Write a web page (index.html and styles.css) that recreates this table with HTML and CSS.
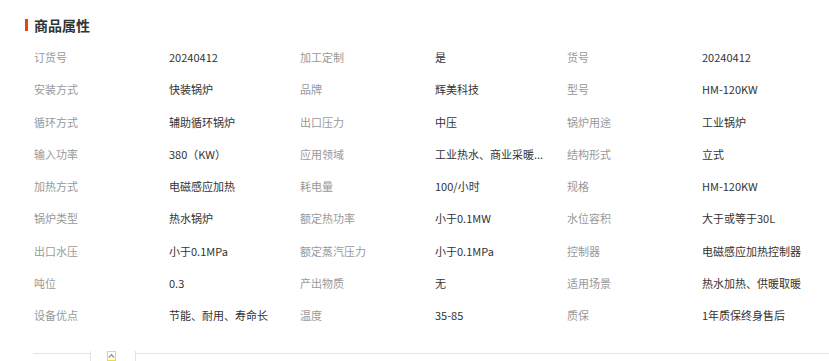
FILE: index.html
```html
<!DOCTYPE html>
<html lang="zh-CN">
<head>
<meta charset="utf-8">
<title>商品属性</title>
<link rel="stylesheet" href="styles.css">
</head>
<body>
<div class="panel">
  <h2 class="title">商品属性</h2>
  <div class="grid">
    <div class="k">订货号</div><div class="v">20240412</div>
    <div class="k">加工定制</div><div class="v">是</div>
    <div class="k">货号</div><div class="v">20240412</div>

    <div class="k">安装方式</div><div class="v">快装锅炉</div>
    <div class="k">品牌</div><div class="v">辉美科技</div>
    <div class="k">型号</div><div class="v">HM-120KW</div>

    <div class="k">循环方式</div><div class="v">辅助循环锅炉</div>
    <div class="k">出口压力</div><div class="v">中压</div>
    <div class="k">锅炉用途</div><div class="v">工业锅炉</div>

    <div class="k">输入功率</div><div class="v">380（KW）</div>
    <div class="k">应用领域</div><div class="v">工业热水、商业采暖...</div>
    <div class="k">结构形式</div><div class="v">立式</div>

    <div class="k">加热方式</div><div class="v">电磁感应加热</div>
    <div class="k">耗电量</div><div class="v">100/小时</div>
    <div class="k">规格</div><div class="v">HM-120KW</div>

    <div class="k">锅炉类型</div><div class="v">热水锅炉</div>
    <div class="k">额定热功率</div><div class="v">小于0.1MW</div>
    <div class="k">水位容积</div><div class="v">大于或等于30L</div>

    <div class="k">出口水压</div><div class="v">小于0.1MPa</div>
    <div class="k">额定蒸汽压力</div><div class="v">小于0.1MPa</div>
    <div class="k">控制器</div><div class="v">电磁感应加热控制器</div>

    <div class="k">吨位</div><div class="v">0.3</div>
    <div class="k">产出物质</div><div class="v">无</div>
    <div class="k">适用场景</div><div class="v">热水加热、供暖取暖</div>

    <div class="k">设备优点</div><div class="v">节能、耐用、寿命长</div>
    <div class="k">温度</div><div class="v">35-85</div>
    <div class="k">质保</div><div class="v">1年质保终身售后</div>
  </div>
</div>
<div class="tabbar">
  <div class="seg-left"></div>
  <div class="seg-tab"><span class="caret"><svg width="7" height="6" viewBox="0 0 7 6"><path d="M0.8 4.6 L3.5 1.6 L6.2 4.6" fill="none" stroke="#888" stroke-width="1.2"/></svg></span></div>
  <div class="seg-right"></div>
</div>
</body>
</html>
```
FILE: styles.css
```css
html, body {
  margin: 0;
  padding: 0;
  background: #fff;
}
body {
  width: 829px;
  height: 361px;
  overflow: hidden;
  font-family: "Noto Sans CJK SC", "Liberation Sans", sans-serif;
  font-size: 11px;
  color: #333;
}
.panel {
  padding: 17px 0 0 25px;
}
.title {
  margin: 0;
  height: 16px;
  line-height: 16px;
  font-size: 14px;
  font-weight: bold;
  color: #333;
  display: flex;
  align-items: center;
  gap: 6px;
}
.title::before {
  content: "";
  width: 3px;
  height: 12px;
  background: #f2400f;
}
.grid {
  margin: 8px 0 0 9px;
  display: grid;
  grid-template-columns: 135px 131px 135px 132px 135px 1fr;
  grid-auto-rows: 32.25px;
  align-items: center;
}
.k {
  color: #999;
  white-space: nowrap;
}
.v {
  color: #333;
  white-space: nowrap;
}
.tabbar {
  margin: 22px 0 0 33px;
  display: flex;
  height: 10px;
}
.seg-left {
  width: 57px;
  border-top: 1px solid #e3e3e3;
}
.seg-tab {
  width: 44px;
  border-left: 1px solid #e3e3e3;
  border-right: 1px solid #e3e3e3;
  display: flex;
  justify-content: center;
  align-items: flex-start;
  margin-top: -2px;
}
.caret {
  display: flex;
  width: 7px;
  height: 8px;
  border: 1px solid #f0e020;
  align-items: center;
  justify-content: center;
  margin-left: -4px;
}
.seg-right {
  flex: 1;
  border-top: 1px solid #e3e3e3;
}
```
